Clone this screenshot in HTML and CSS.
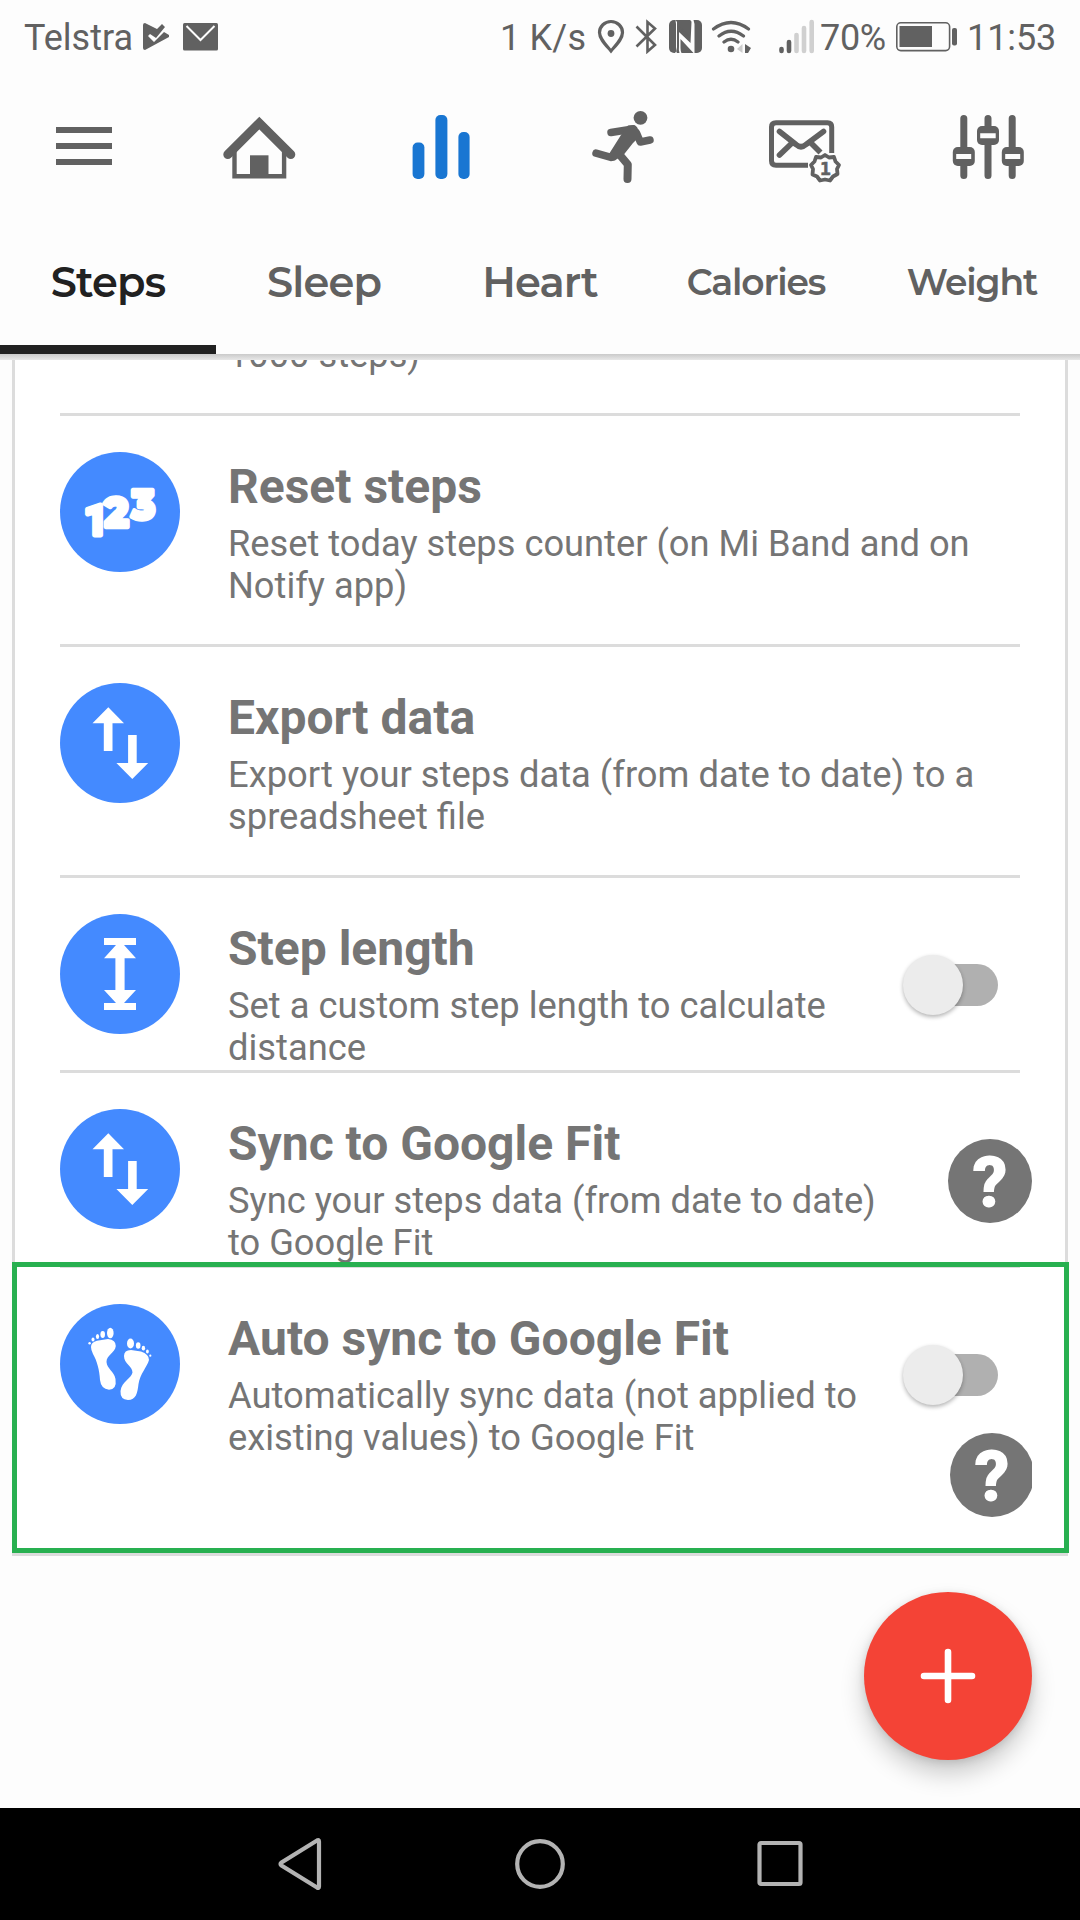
FILE: index.html
```html
<!DOCTYPE html>
<html lang="en">
<head>
<meta charset="utf-8">
<title>Steps</title>
<link rel="stylesheet" href="styles.css">
</head>
<body>
<div class="screen">
  <header class="status">
    <span class="carrier">Telstra</span>
    <svg class="ic-play" viewBox="143 23 26 28" width="26" height="28"><path d="M145 23 157 29 162 24 165 27 156 38 150 34 148 36 154 42 164 32 169 35V37L145 50Q143 50 143 48V25Q143 23 145 23Z" fill="#616161"/></svg>
    <svg class="ic-mail" viewBox="183 23 35 28" width="35" height="28"><rect x="183" y="23" width="35" height="27.500" rx="1.500" fill="#616161"/><path d="M186.500 26 200.500 40 214.500 26" fill="none" stroke="#fdfdfd" stroke-width="2"/></svg>
    <span class="rate">1 K/s</span>
    <svg class="ic-pin" viewBox="597 19 28 35" width="28" height="35"><path d="M611 51C606 45 599.500 39 599.500 32.500a11.500 11 0 0 1 23 0C622.500 39 616 45 611 51Z" fill="none" stroke="#616161" stroke-width="3.200"/><circle cx="611" cy="33.500" r="3.400" fill="#616161"/></svg>
    <svg class="ic-bt" viewBox="635 19 23 35" width="23" height="35"><path d="M636.500 26.500 655 45 647.500 51.500V22L655 28.500 636.500 46.500" fill="none" stroke="#616161" stroke-width="2.600"/></svg>
    <svg class="ic-nfc" viewBox="669 20 33 33" width="33" height="33"><rect x="669" y="20" width="33" height="33" rx="5" fill="#616161"/><path d="M675.500 20 677 22V47Q677 51 675 53H679.500Q678.500 50 679 46V32L690.500 43 691.500 22Q691.500 21 690 20H693.500L694.500 24V53H693.500L680.500 39V48Q680.500 51 681.500 53H677Q676 52 676 47V24Z" fill="#fdfdfd"/><path d="M679 27 689.500 37" stroke="#616161" stroke-width="1.500"/></svg>
    <svg class="ic-wifi" viewBox="711 18 42 36" width="42" height="36"><g fill="none" stroke="#616161" stroke-width="3.200" stroke-linecap="round"><path d="M713.500 28Q731 15 748.500 28M719 35Q731 25.500 743.500 35M724 41Q731 35.500 738 41"/></g><circle cx="731" cy="48" r="3.300" fill="#616161"/><path d="M737 48 742.500 43V52Z" fill="#ccc"/><path d="M745 43 751 47 748 52 745 52Z" fill="#616161"/></svg>
    <svg class="ic-signal" viewBox="779 18 36 35" width="36" height="35"><g stroke-width="4.600" stroke-linecap="round"><path d="M781.500 48V50M789 41V50" stroke="#616161"/><path d="M796.500 34V50M804 27V50M811.700 21V50" stroke="#d0d0d0"/></g></svg>
    <span class="pct">70%</span>
    <svg class="ic-batt" viewBox="896 22 62 30" width="62" height="30"><rect x="896.800" y="22.800" width="52.800" height="27.800" rx="4" fill="none" stroke="#616161" stroke-width="1.600"/><rect x="899.500" y="26" width="32.500" height="21" fill="#616161"/><rect x="952" y="28" width="5" height="17.500" rx="2" fill="#616161"/></svg>
    <span class="clock">11:53</span>
  </header>

  <nav class="toolbar">
    <svg viewBox="44 105 80 80"><path d="M56 130H112M56 146H112M56 162H112" stroke="#616161" stroke-width="6"/></svg>
    <svg viewBox="218.700 105 80 80"><g fill="none" stroke="#616161"><path d="M227.500 154.500 259 123 290.500 154.500" stroke-width="9" stroke-linecap="round"/><path d="M234.200 150V176.200H283.800V150" stroke-width="4.400"/></g><path d="M249.700 155.300H268.200V177H249.700Z" fill="#616161"/></svg>
    <svg viewBox="401.600 105 80 80"><g fill="#1976d2"><rect x="412.200" y="142.500" width="11.800" height="36.500" rx="5"/><rect x="435" y="115" width="12" height="64" rx="5"/><rect x="458" y="132" width="11.200" height="47" rx="5"/></g></svg>
    <svg viewBox="584 105 80 80"><g fill="none" stroke="#616161" stroke-linecap="round" stroke-linejoin="round" stroke-width="7.500"><path d="M611 132.500 633 129"/><path d="M596 153.200 611 157.300"/><path d="M636.500 133 640.300 142 650 140"/><path d="M619 154 627.800 164.500 627.500 179" stroke-width="8"/></g><path d="M628 125.500 634 125Q638 126 639 133L640 136 633 143 623.500 155 617 159Q613 163 608 159L609 154 621 135Z" fill="#616161"/><circle cx="640.500" cy="117.800" r="6.900" fill="#616161"/></svg>
    <svg viewBox="766 105 80 80"><g fill="none" stroke="#616161" stroke-width="5"><path d="M808 165.200H776Q771.500 165.200 771.500 160.700V127Q771.500 122.800 776 122.800H827.500Q831.700 122.800 831.700 127V153"/><g stroke-width="5.600" stroke-linecap="round" stroke-linejoin="round"><path d="M779.500 131.500 796 144.500Q801 149 806 144.500L823.500 131.500M791.500 143.500 779.500 155"/><path stroke-linecap="butt" d="M810 142 820.500 152.500"/></g><path stroke-width="3.800" stroke-linejoin="round" d="M825 155 829 157.500 834 157 835.500 161.500 839 165 837 169 837.500 174 833 176.500 830 180.500 825 179.500 820 180.500 817 176.500 812.500 174.500 813 169 811 165 814.500 161.500 816 157 821 157.500Z"/></g><text class="badge-num" x="825.500" y="174.500" text-anchor="middle">1</text></svg>
    <svg viewBox="948.800 105 80 80"><path d="M963.600 118.500V175.500M987.800 118.500V175.500M1012 118.500V175.500" stroke="#616161" stroke-width="7" stroke-linecap="round"/><g fill="#616161"><rect x="952.600" y="147" width="22" height="19" rx="5"/><rect x="976.800" y="126" width="22" height="19" rx="5"/><rect x="1001.600" y="147" width="22" height="19" rx="5"/></g><path d="M956 156.500H971M980 135.700H995.500M1005 156.500H1020" stroke="#fdfdfd" stroke-width="5"/></svg>
  </nav>

  <div class="tabs">
    <div class="tab active">Steps</div>
    <div class="tab">Sleep</div>
    <div class="tab">Heart</div>
    <div class="tab small">Calories</div>
    <div class="tab small">Weight</div>
  </div>
  <div class="tabs-shadow"></div>

  <main class="content">
    <section class="card">
      <div class="row partial"><p class="desc">1000 steps)</p></div>
      <div class="row">
        <svg class="disc" viewBox="0 0 120 120"><circle cx="60" cy="60" r="60"/><g class="digits"><text class="one" x="24" y="83">1</text><text x="44.500" y="74.500" textLength="24" lengthAdjust="spacingAndGlyphs">2</text><text x="71.500" y="66.500" textLength="23.500" lengthAdjust="spacingAndGlyphs">3</text></g></svg>
        <div class="text"><h2>Reset steps</h2><p class="desc">Reset today steps counter (on Mi Band and on<br>Notify app)</p></div>
      </div>
      <div class="row">
        <svg class="disc" viewBox="0 0 120 120"><circle cx="60" cy="60" r="60"/><path d="M48.300 24.300 64 40.300H52.500V68H43.800V40.300H32.500ZM72.300 96 56.400 80H68.100V52H76.700V80H88.200Z" fill="#fff"/></svg>
        <div class="text"><h2>Export data</h2><p class="desc wide">Export your steps data (from date to date) to a<br>spreadsheet file</p></div>
      </div>
      <div class="row short">
        <svg class="disc" viewBox="0 0 120 120"><circle cx="60" cy="60" r="60"/><path d="M44 24H76V31H64L76 44.300H64.600V76H76L64 89H76V96H44V89H56L44 76H55.400V44.300H44L56 31H44Z" fill="#fff"/></svg>
        <div class="text"><h2>Step length</h2><p class="desc wide">Set a custom step length to calculate<br>distance</p></div>
        <div class="controls"><div class="switch"><i></i></div></div>
      </div>
      <div class="row short">
        <svg class="disc" viewBox="0 0 120 120"><circle cx="60" cy="60" r="60"/><path d="M48.300 24.300 64 40.300H52.500V68H43.800V40.300H32.500ZM72.300 96 56.400 80H68.100V52H76.700V80H88.200Z" fill="#fff"/></svg>
        <div class="text"><h2>Sync to Google Fit</h2><p class="desc">Sync your steps data (from date to date)<br>to Google Fit</p></div>
        <div class="controls single"><svg class="help" viewBox="0 0 84 84"><circle cx="42" cy="42" r="42"/><text x="42" y="66.500" text-anchor="middle">?</text></svg></div>
      </div>
      <div class="row last">
        <svg class="disc" viewBox="0 0 120 120"><circle cx="60" cy="60" r="60"/><g fill="#fff"><path d="M31 43Q31 38 37 36.700L48 35Q56 36 55.800 42C55 49 46.500 51 46.500 58C47 65 54 67 55.500 75Q57 85.500 49 85.700Q41 85 40 76C39.500 66 37 57 33 50Q31 46 31 43Z"/><ellipse cx="50.300" cy="29" rx="3.300" ry="5.200"/><ellipse cx="42.700" cy="30.500" rx="2.300" ry="3.400"/><ellipse cx="37.500" cy="32.500" rx="1.600" ry="2.500"/><ellipse cx="33" cy="35.500" rx="1.500" ry="2.100"/><circle cx="29.600" cy="39.300" r="1.200"/><path d="M64 52Q64 46 71 46L81 47.500Q89 50 89 56C87 63 80 70 78.500 80C77.500 89 76 96 68 96Q60 95.500 60.500 87C62 77 71 75 72.500 68.500C72.500 62 64 60 64 52Z"/><ellipse cx="70.500" cy="39.500" rx="3.500" ry="5"/><ellipse cx="78.200" cy="41.500" rx="2.300" ry="3.300"/><ellipse cx="83.400" cy="44.200" rx="1.700" ry="2.400"/><ellipse cx="87.400" cy="47.500" rx="1.400" ry="1.900"/><circle cx="90.300" cy="51.700" r="1.100"/></g></svg>
        <div class="text"><h2>Auto sync to Google Fit</h2><p class="desc wide">Automatically sync data (not applied to<br>existing values) to Google Fit</p></div>
        <div class="controls"><div class="switch"><i></i></div><svg class="help cut" viewBox="0 0 82 84"><circle cx="42" cy="42" r="42"/><text x="42" y="66.500" text-anchor="middle">?</text></svg></div>
        <div class="highlight"></div>
      </div>
    </section>
    <button class="fab" aria-label="Add"><svg viewBox="0 0 168 168"><path d="M84 60V108M60 84H108" stroke="#fff" stroke-width="6.600" stroke-linecap="round"/></svg></button>
  </main>

  <footer class="navbar">
    <svg viewBox="0 0 60 60"><path d="M49 7.500V52.500Q49 54.500 47 53.500L11.500 31.500Q9.500 30 11.500 28.500L47 6.500Q49 5.500 49 7.500Z"/></svg>
    <svg viewBox="0 0 60 60"><circle cx="30" cy="30" r="22.800"/></svg>
    <svg viewBox="0 0 60 60"><rect x="9.500" y="9" width="41" height="41" rx="1.500"/></svg>
  </footer>
</div>
</body>
</html>
```
FILE: styles.css
```css
* { box-sizing: border-box; margin: 0; padding: 0; }
body { background: #fdfdfd; font-family: Roboto, sans-serif; }
svg { display: block; flex: none; }
.screen { width: 1080px; height: 1920px; display: flex; flex-direction: column; overflow: hidden; }

.status { height: 73px; flex: none; display: flex; align-items: center; font-size: 36px; line-height: 42px; color: #616161; white-space: nowrap; }
.status span { flex: none; padding-top: 2px; }
.carrier { margin-left: 24px; width: 119px; }
.ic-mail { margin-left: 14px; }
.rate { margin-left: 282px; width: 97px; letter-spacing: .2px; }
.ic-bt { margin-left: 10px; }
.ic-nfc { margin-left: 11px; }
.ic-wifi { margin-left: 9px; }
.ic-signal { margin-left: 26px; }
.pct { margin-left: 5px; width: 76px; letter-spacing: -.3px; }
.clock { margin-left: 9px; letter-spacing: -.1px; }

.toolbar { height: 147px; flex: none; display: grid; grid-template-columns: 168px repeat(5, 182.4px); justify-items: center; padding-top: 32px; }
.toolbar svg { width: 80px; height: 80px; }
.badge-num { font: bold 18px "DejaVu Sans Mono", monospace; fill: #616161; stroke: #616161; stroke-width: .6px; }

.tabs { height: 134px; flex: none; display: grid; grid-template-columns: repeat(5, 216px); font-family: Montserrat, Inter, sans-serif; font-size: 41.5px; font-weight: 600; letter-spacing: -.8px; color: #616161; }
.tab { display: flex; justify-content: center; padding-top: 37px; line-height: 50px; border-bottom: 9px solid transparent; white-space: nowrap; }
.tab.small { font-size: 36px; letter-spacing: -1.1px; }
.tab.active { color: #212121; border-bottom-color: #212121; }
.tabs-shadow { height: 6px; flex: none; background: linear-gradient(#cacaca, #e8e8e8); }

.content { height: 1448px; flex: none; position: relative; overflow: hidden; }
.card { height: 1196px; margin: 0 12px; background: #fff; border: 3px solid #dcdcdc; border-top: 0; padding: 0 45px; }
.row { height: 231px; display: flex; border-bottom: 3px solid #dcdcdc; padding-top: 36px; white-space: nowrap; }
.row.partial { height: 56px; padding: 0 0 0 168px; align-items: flex-end; overflow: hidden; }
.row.partial .desc { margin-bottom: 37px; }
.row.short { height: 195px; }
.row.last { height: 285px; border-bottom: 0; position: relative; }
.disc { width: 120px; height: 120px; fill: #448aff; }
.digits { fill: #fff; stroke: #fff; stroke-width: 4.5px; stroke-linejoin: round; font: 800 42px Montserrat, Inter, sans-serif; }
.digits .one { font: 700 42px Roboto, sans-serif; stroke-width: 5px; }
.text { margin-left: 48px; padding-top: 7px; color: #757575; width: 660px; flex: none; }
.text h2 { font-size: 48px; line-height: 56px; font-weight: 700; }
.text .desc { margin-top: 8px; }
.desc { font-size: 36.25px; line-height: 42px; color: #757575; }
.desc.wide { font-size: 36.33px; }

.controls { margin-left: auto; display: flex; flex-direction: column; align-items: flex-end; padding-top: 41px; margin-right: -12px; }
.controls.single { padding-top: 30px; }
.switch { width: 95px; height: 60px; margin-right: 34px; padding: 9px 0 9px 12px; position: relative; }
.switch::before { content: ""; display: block; height: 42px; border-radius: 21px; background: #b0b0b0; }
.switch i { position: absolute; left: 0; top: 0; width: 60px; height: 60px; border-radius: 50%; background: #ececec; box-shadow: 0 2px 4px rgba(0,0,0,.3); }
.help { width: 84px; height: 84px; fill: #757575; }
.help.cut { width: 82px; margin-top: 28px; }
.help text { fill: #fff; stroke: #fff; stroke-width: 1.8px; font: 700 69px Roboto, sans-serif; }
.highlight { position: absolute; left: -48px; right: -49px; top: -6px; height: 291px; border: 5px solid #28b050; }

.fab { position: absolute; left: 864px; top: 1232px; width: 168px; height: 168px; border: 0; border-radius: 50%; background: #f44336; box-shadow: 0 14px 24px rgba(0,0,0,.2), 0 2px 8px rgba(0,0,0,.12); }
.fab svg { width: 168px; height: 168px; }

.navbar { height: 112px; flex: none; background: #000; display: flex; justify-content: center; align-items: center; gap: 180px; }
.navbar svg { width: 60px; height: 60px; fill: none; stroke: #b3b3b3; stroke-width: 4.2px; }
```
